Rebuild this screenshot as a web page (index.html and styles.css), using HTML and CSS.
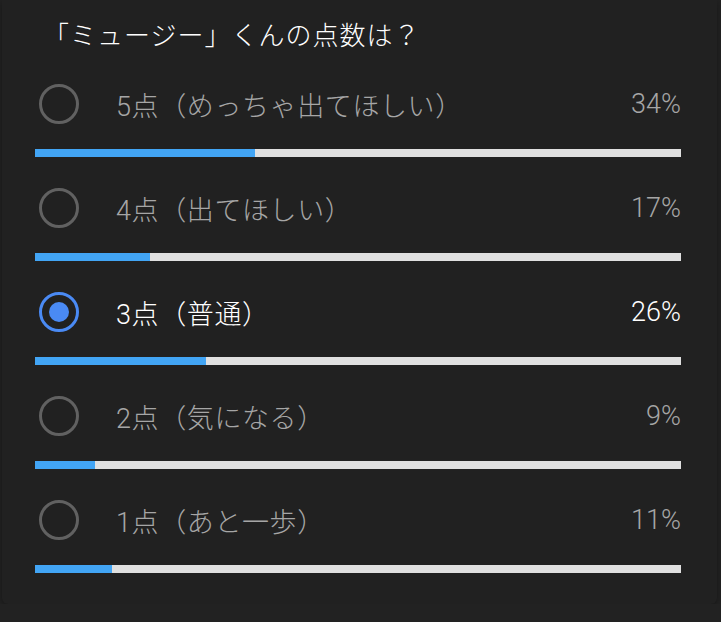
FILE: index.html
```html
<!DOCTYPE html>
<html lang="ja">
<head>
    <meta charset="UTF-8">
    <meta name="viewport" content="width=device-width, initial-scale=1.0">
    <title>点数アンケート</title>
    <link rel="stylesheet" href="styles.css">
</head>
<body>

    <div class="poll">
        <h1 class="poll-title">「ミュージー」くんの点数は？</h1>

        <div class="option">
            <div class="option-row">
                <span class="radio"></span>
                <span class="label">5点（めっちゃ出てほしい）</span>
                <span class="percent">34%</span>
            </div>
            <div class="bar"><div class="bar-fill" style="width: 34%"></div></div>
        </div>

        <div class="option">
            <div class="option-row">
                <span class="radio"></span>
                <span class="label">4点（出てほしい）</span>
                <span class="percent">17%</span>
            </div>
            <div class="bar"><div class="bar-fill" style="width: 17.8%"></div></div>
        </div>

        <div class="option selected">
            <div class="option-row">
                <span class="radio"></span>
                <span class="label">3点（普通）</span>
                <span class="percent">26%</span>
            </div>
            <div class="bar"><div class="bar-fill" style="width: 26.5%"></div></div>
        </div>

        <div class="option">
            <div class="option-row">
                <span class="radio"></span>
                <span class="label">2点（気になる）</span>
                <span class="percent">9%</span>
            </div>
            <div class="bar"><div class="bar-fill" style="width: 9.3%"></div></div>
        </div>

        <div class="option">
            <div class="option-row">
                <span class="radio"></span>
                <span class="label">1点（あと一歩）</span>
                <span class="percent">11%</span>
            </div>
            <div class="bar"><div class="bar-fill" style="width: 11.9%"></div></div>
        </div>
    </div>

</body>
</html>
```

FILE: styles.css
```css
body {
    margin: 0;
    background-color: #222222;
    font-family: Roboto, "Noto Sans CJK JP", sans-serif;
}
.poll {
    margin: 0 4px 0 2px;
    padding: 19px 36px 31px 33px;
    background-color: #212121;
    border-radius: 0 0 6px 6px;
    box-shadow: 0 2px 6px rgba(0, 0, 0, 0.35);
}
.poll-title {
    margin: 0;
    padding-left: 8px;
    font-size: 26px;
    font-weight: 300;
    letter-spacing: 1px;
    line-height: 34px;
    color: #ffffff;
}
.option {
    padding-top: 31px;
}
.option-row {
    display: flex;
    align-items: center;
    height: 40px;
    margin-bottom: 25px;
}
.radio {
    box-sizing: border-box;
    width: 40px;
    height: 40px;
    margin-left: 4px;
    border: 3px solid #616161;
    border-radius: 50%;
    display: flex;
    align-items: center;
    justify-content: center;
}
.label {
    flex: 1;
    margin-left: 37px;
    font-size: 27px;
    font-weight: 300;
    letter-spacing: 0.6px;
    color: #a6a6a6;
}
.percent {
    font-size: 27px;
    font-weight: 300;
    color: #a6a6a6;
}
.bar {
    height: 8px;
    background-color: #e0e0e0;
}
.bar-fill {
    height: 100%;
    background-color: #42a5f5;
}
.selected .radio {
    border-color: #4a8af4;
}
.selected .radio::after {
    content: "";
    width: 20px;
    height: 20px;
    border-radius: 50%;
    background-color: #4a8af4;
}
.selected .label,
.selected .percent {
    color: #ffffff;
}
```
